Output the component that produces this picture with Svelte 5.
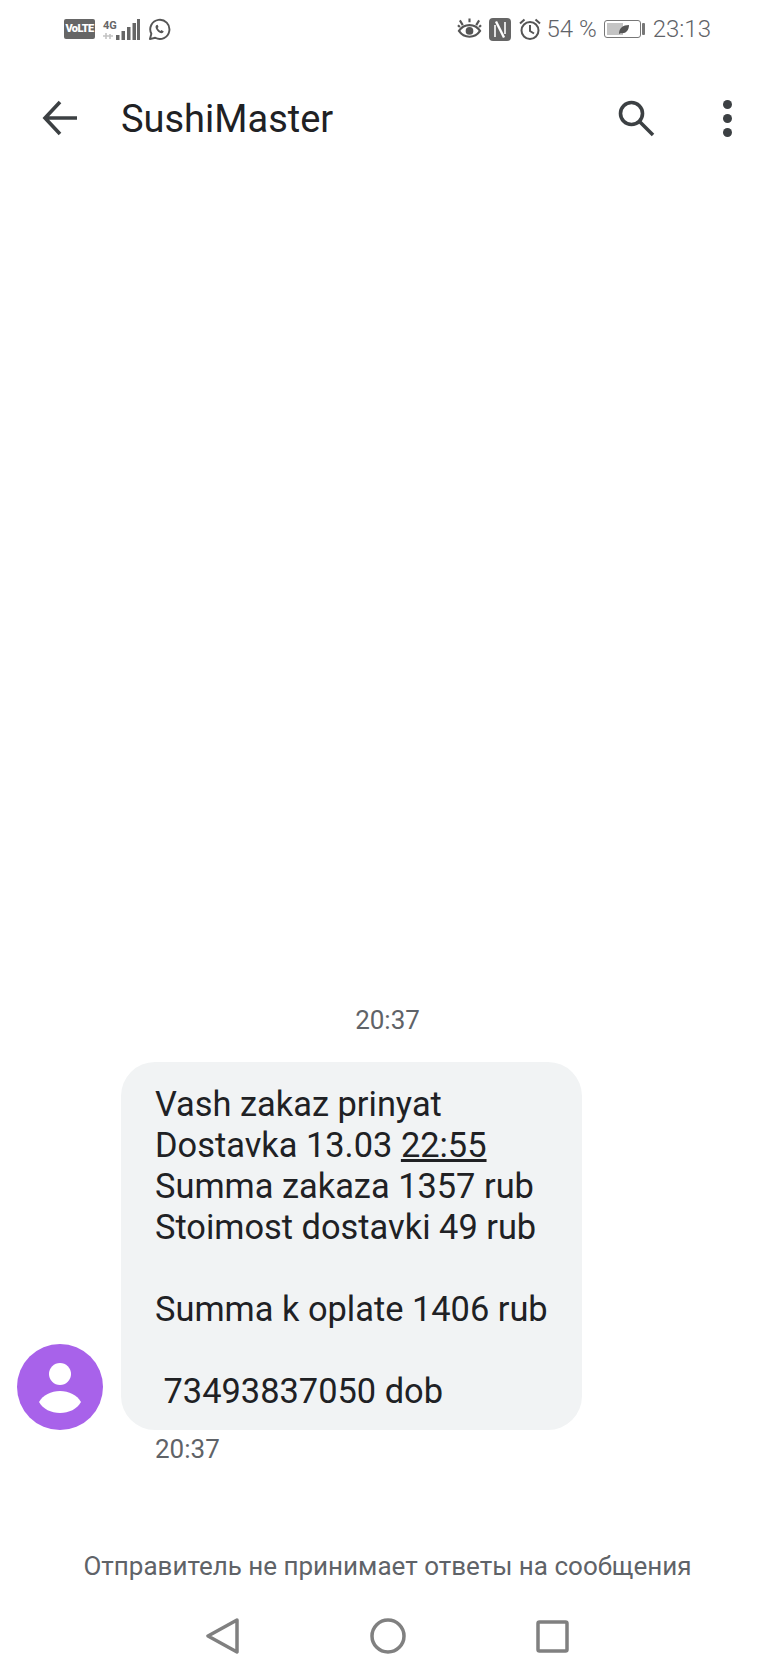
<script>
  const lines = [
    'Vash zakaz prinyat',
    null,
    'Summa zakaza 1357 rub',
    'Stoimost dostavki 49 rub',
    '\u00a0',
    'Summa k oplate 1406 rub',
    '\u00a0',
    '\u00a073493837050 dob'
  ];
</script>

<div class="screen">
  <div class="status">
    <div class="status-left">
      <span class="volte">VoLTE</span>
      <span class="net">
        <span class="net-label">4G</span>
        <svg width="11" height="8" viewBox="0 0 11 8"><path d="M0 4h10M3 1v6M7 2v5" stroke="#c4c4c4" stroke-width="1.6" fill="none"/></svg>
      </span>
      <svg class="bars" width="24" height="23" viewBox="0 0 24 23" fill="#666">
        <rect x="0" y="17" width="3.500" height="5" />
        <rect x="5.500" y="13" width="3.500" height="9" />
        <rect x="11" y="9" width="3.500" height="13" />
        <rect x="16.500" y="5" width="3.500" height="17" />
        <rect x="21" y="1" width="3" height="21" />
      </svg>
      <svg class="wa" width="23" height="23" viewBox="0 0 24 24" fill="none">
        <path d="M2 22l1.500-5.500A10 10 0 1 1 7.500 20.600z" stroke="#555" stroke-width="2" stroke-linejoin="round" />
        <path d="M8.500 7.500c-1 1-1 3 1 5.500s4.500 3.500 6 2.500l1-1.500-2.500-1.500-1 1c-1-.3-2.500-2-3-3l1-1-1-2.500z" fill="#555" />
      </svg>
    </div>
    <div class="status-right">
      <svg width="25" height="22" viewBox="0 0 26 22" fill="none" stroke="#555" stroke-width="2.200">
        <path d="M2 13c3-4.500 7-6 11-6s8 1.500 11 6c-3 4.500-7 6-11 6s-8-1.500-11-6z" />
        <circle cx="13" cy="13" r="4" fill="#555" stroke="none" />
        <path d="M3 2l3 5M13 0v4M23 2l-3 5M1 7l2 2M25 7l-2 2" />
      </svg>
      <svg width="22" height="23" viewBox="0 0 22 23">
        <rect width="22" height="23" rx="4" fill="#666" />
        <path d="M7 3.500l8 16" fill="none" stroke="#fff" stroke-width="2.400" />
        <path d="M6 19V7M16 16V4" fill="none" stroke="#fff" stroke-width="1.600" />
      </svg>
      <svg width="24" height="23" viewBox="0 0 23 23" fill="none" stroke="#555" stroke-width="2">
        <circle cx="11.500" cy="12.500" r="8.500" />
        <path d="M11.500 7v6l4 2.500M1.500 5.500L6 1.500M21.500 5.500L17 1.500" />
      </svg>
      <span class="pct">54 %</span>
      <span class="battery">
        <span class="battery-body">
          <span class="battery-fill"></span>
          <svg class="leaf" width="12" height="11" viewBox="0 0 12 11"><path d="M1 10C1 4 5 1 11 1c0 6-4 9-8 8z" fill="#555" /></svg>
        </span>
        <span class="battery-tip"></span>
      </span>
      <span class="clock">23:13</span>
    </div>
  </div>

  <header class="appbar">
    <svg class="back" width="36" height="36" viewBox="0 0 36 36" fill="none" stroke="#3c4043" stroke-width="3.600">
      <path d="M35 18H4M18 2L3 18l15 16" />
    </svg>
    <h1>SushiMaster</h1>
    <svg class="search" width="38" height="38" viewBox="0 0 38 38" fill="none" stroke="#3c4043" stroke-width="3.600">
      <circle cx="14.500" cy="14.500" r="11" />
      <path d="M22.500 22.500L36 36" />
    </svg>
    <div class="more"><i></i><i></i><i></i></div>
  </header>

  <main class="thread">
    <div class="day">20:37</div>
    <div class="message">
      <div class="avatar">
        <svg width="86" height="86" viewBox="0 0 86 86" fill="#fff">
          <circle cx="43" cy="30" r="11" />
          <path d="M22 58c4-7 12-11 21-11s17 4 21 11c-4 7-12 11-21 11s-17-4-21-11z" />
        </svg>
      </div>
      <div class="bubble">
        {#each lines as line}
          {#if line === null}
            <div>Dostavka 13.03 <u>22:55</u></div>
          {:else}
            <div>{line}</div>
          {/if}
        {/each}
      </div>
    </div>
    <div class="stamp">20:37</div>
  </main>

  <div class="notice">Отправитель не принимает ответы на сообщения</div>

  <nav class="navbar">
    <svg width="34" height="36" viewBox="0 0 34 36" fill="none" stroke="#808080" stroke-width="3.500" stroke-linejoin="round">
      <path d="M31 2L2 18l29 16z" />
    </svg>
    <svg width="36" height="36" viewBox="0 0 36 36" fill="none" stroke="#808080" stroke-width="3.500">
      <circle cx="18" cy="18" r="16" />
    </svg>
    <svg width="33" height="33" viewBox="0 0 33 33" fill="none" stroke="#808080" stroke-width="3.500" stroke-linejoin="round">
      <rect x="2" y="2" width="29" height="29" rx="1.500" />
    </svg>
  </nav>
</div>

<style>
  :global(body) {
    margin: 0;
    background: #fff;
  }
  .screen {
    height: 1680px;
    display: flex;
    flex-direction: column;
    font-family: Roboto, "Noto Sans", sans-serif;
    color: #202124;
    overflow: hidden;
  }
  .status {
    height: 58px;
    display: flex;
    justify-content: space-between;
    align-items: center;
    padding: 0 64px;
    color: #5f6368;
  }
  .status-left,
  .status-right {
    display: flex;
    align-items: center;
  }
  .status-left {
    gap: 8px;
  }
  .status-right {
    gap: 7px;
  }
  .volte {
    background: #666;
    color: #fff;
    border-radius: 2px;
    font-size: 11px;
    font-weight: 900;
    width: 31px;
    height: 20px;
    line-height: 20px;
    text-align: center;
    letter-spacing: -0.6px;
    white-space: nowrap;
    overflow: hidden;
  }
  .net {
    display: flex;
    flex-direction: column;
    width: 13px;
    margin-right: -8px;
  }
  .net-label {
    font-size: 11px;
    font-weight: 700;
    line-height: 13px;
    color: #666;
  }
  .pct,
  .clock {
    font-size: 24px;
    font-weight: 300;
  }
  .pct {
    margin-left: -3px;
  }
  .clock {
    margin-left: 1px;
  }
  .battery {
    display: flex;
    align-items: center;
    gap: 1px;
  }
  .battery-body {
    position: relative;
    width: 37px;
    height: 18px;
    border: 1px solid #777;
    border-radius: 3px;
    padding: 2px;
    box-sizing: border-box;
    display: block;
  }
  .battery-fill {
    display: block;
    width: 54%;
    height: 100%;
    background: #c4c4c4;
  }
  .leaf {
    position: absolute;
    left: 13px;
    top: 3px;
  }
  .battery-tip {
    width: 3px;
    height: 12px;
    background: #777;
    border-radius: 1px;
  }
  .appbar {
    height: 120px;
    display: flex;
    align-items: center;
    padding: 0 43px 0 42px;
    box-sizing: border-box;
  }
  .back {
    flex: none;
  }
  .appbar h1 {
    flex: 1;
    margin: 2px 0 0 43px;
    font-size: 38px;
    font-weight: 400;
    color: #202124;
  }
  .search {
    margin-right: 68px;
  }
  .more {
    display: flex;
    flex-direction: column;
    gap: 5px;
  }
  .more i {
    width: 9px;
    height: 9px;
    border-radius: 50%;
    background: #3c4043;
  }
  .thread {
    flex: 1;
    display: flex;
    flex-direction: column;
    justify-content: flex-end;
    padding-bottom: 87px;
  }
  .day {
    text-align: center;
    font-size: 26px;
    color: #5f6368;
    margin-bottom: 27px;
  }
  .message {
    display: flex;
    align-items: flex-end;
    padding-left: 17px;
  }
  .avatar {
    width: 86px;
    height: 86px;
    border-radius: 50%;
    background: #a862ea;
    flex: none;
    margin-right: 18px;
  }
  .avatar svg {
    display: block;
  }
  .bubble {
    width: 461px;
    box-sizing: border-box;
    padding: 22px 20px 18px 34px;
    background: #f1f3f4;
    border-radius: 34px;
    font-size: 34.400px;
    line-height: 41px;
    color: #202124;
  }
  .stamp {
    margin: 4px 0 0 155px;
    font-size: 26px;
    color: #5f6368;
  }
  .notice {
    text-align: center;
    font-size: 26px;
    color: #5f6368;
    height: 41px;
  }
  .navbar {
    height: 88px;
    display: flex;
    justify-content: center;
    align-items: center;
    gap: 130px;
  }
</style>
